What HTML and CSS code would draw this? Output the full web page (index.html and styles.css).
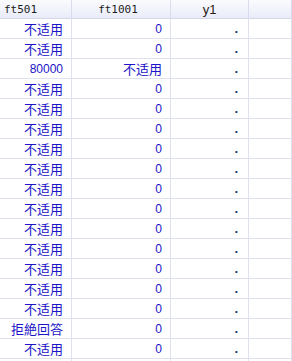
FILE: index.html
```html
<!DOCTYPE html>
<html>
<head>
<meta charset="utf-8">
<link rel="stylesheet" href="styles.css">
</head>
<body>
<div class="grid">
  <div class="hd hd-left">ft501</div>
  <div class="hd">ft1001</div>
  <div class="hd hd-sans">y1</div>
  <div class="hd"></div>

  <div class="c cjk">不适用</div><div class="c num">0</div><div class="c dot">.</div><div class="c"></div>
  <div class="c cjk">不适用</div><div class="c num">0</div><div class="c dot">.</div><div class="c"></div>
  <div class="c num">80000</div><div class="c cjk">不适用</div><div class="c dot">.</div><div class="c"></div>
  <div class="c cjk">不适用</div><div class="c num">0</div><div class="c dot">.</div><div class="c"></div>
  <div class="c cjk">不适用</div><div class="c num">0</div><div class="c dot">.</div><div class="c"></div>
  <div class="c cjk">不适用</div><div class="c num">0</div><div class="c dot">.</div><div class="c"></div>
  <div class="c cjk">不适用</div><div class="c num">0</div><div class="c dot">.</div><div class="c"></div>
  <div class="c cjk">不适用</div><div class="c num">0</div><div class="c dot">.</div><div class="c"></div>
  <div class="c cjk">不适用</div><div class="c num">0</div><div class="c dot">.</div><div class="c"></div>
  <div class="c cjk">不适用</div><div class="c num">0</div><div class="c dot">.</div><div class="c"></div>
  <div class="c cjk">不适用</div><div class="c num">0</div><div class="c dot">.</div><div class="c"></div>
  <div class="c cjk">不适用</div><div class="c num">0</div><div class="c dot">.</div><div class="c"></div>
  <div class="c cjk">不适用</div><div class="c num">0</div><div class="c dot">.</div><div class="c"></div>
  <div class="c cjk">不适用</div><div class="c num">0</div><div class="c dot">.</div><div class="c"></div>
  <div class="c cjk">不适用</div><div class="c num">0</div><div class="c dot">.</div><div class="c"></div>
  <div class="c cjk">拒絶回答</div><div class="c num">0</div><div class="c dot">.</div><div class="c"></div>
  <div class="c cjk">不适用</div><div class="c num">0</div><div class="c dot">.</div><div class="c"></div>
  <div class="c"></div><div class="c"></div><div class="c"></div><div class="c"></div>
</div>
</body>
</html>
```

FILE: styles.css
```css
html, body {
  margin: 0;
  padding: 0;
  background: #ffffff;
  overflow: hidden;
}

.grid {
  display: grid;
  grid-template-columns: 72px 99px 78px 1fr;
  grid-auto-rows: 20px;
  grid-template-rows: 19px;
  width: 292px;
}

.hd {
  box-sizing: border-box;
  border-right: 1px solid #d9dcec;
  border-bottom: 1px solid #d5d8ea;
  background: linear-gradient(#fbfbfe, #e9ecf8);
  font-family: "DejaVu Sans Mono", monospace;
  font-size: 11px;
  color: #1c1c1c;
  display: flex;
  align-items: center;
  justify-content: center;
  padding-right: 6px;
}

.hd-left {
  justify-content: flex-start;
  padding-left: 4px;
  padding-right: 0;
}

.hd-sans {
  font-family: "Liberation Sans", Arial, sans-serif;
  font-size: 13px;
  color: #2a2010;
  padding-right: 0;
}

.c {
  box-sizing: border-box;
  border-right: 1px solid #dfe1ef;
  border-bottom: 1px solid #dfe1ef;
  display: flex;
  align-items: center;
  justify-content: flex-end;
  padding-right: 8px;
  color: #1d14c8;
  font-family: "Liberation Sans", Arial, sans-serif;
  font-size: 12px;
}

.cjk {
  font-family: "Noto Sans CJK SC", "Noto Sans CJK JP", sans-serif;
  font-size: 13px;
  padding-right: 8px;
}

.num {
  padding-right: 8px;
}

.dot {
  color: #1b3576;
  font-weight: bold;
  font-size: 13px;
  padding-right: 10px;
}
```
